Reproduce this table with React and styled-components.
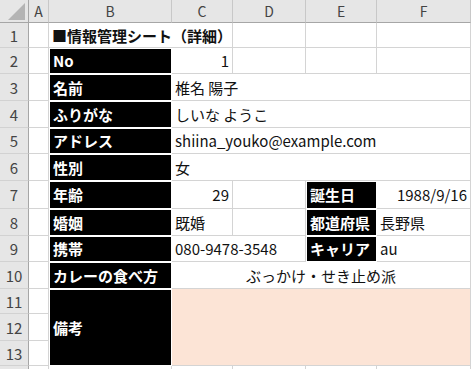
import React from 'react';
import styled, { createGlobalStyle } from 'styled-components';

const GlobalStyle = createGlobalStyle`
  html, body { margin: 0; padding: 0; background: #ffffff; }
  body { font-family: "Noto Sans CJK JP", "Noto Sans", sans-serif; }
`;

const LETTERS = ['A', 'B', 'C', 'D', 'E', 'F'];
const ROW_COUNT = 14;
// Rows whose numbers are fully on screen; the last row only peeks in at the bottom
const NUMBERED_ROWS = 13;

const Sheet = styled.div`
  display: grid;
  grid-template-columns: 29px 20px 123px 61px 73px 71px 94px;
  grid-template-rows: 23px 25px 26px 27px 27px 26px 27px 28px 27px 26px 27px 25px 27px 25px 20px;
  width: 471px;
  height: 369px;
  overflow: hidden;
  font-size: 15px;
  color: #111;
`;

const Corner = styled.div`
  grid-row: 1;
  grid-column: 1;
  background: #e6e6e6;
  border-right: 1px solid #a6a6a6;
  border-bottom: 1px solid #a6a6a6;
  box-sizing: border-box;
  display: flex;
  align-items: flex-end;
  justify-content: flex-end;
  padding: 0 3px 2px 0;
`;

const ColHead = styled.div`
  grid-row: 1;
  grid-column: ${p => p.$col};
  background: #e6e6e6;
  border-right: 1px solid #c8c8c8;
  border-bottom: 1px solid #a6a6a6;
  box-sizing: border-box;
  display: flex;
  align-items: center;
  justify-content: center;
  font-size: 14px;
  color: #444;
`;

const RowHead = styled.div`
  grid-row: ${p => p.$row};
  grid-column: 1;
  background: #e6e6e6;
  border-right: 1px solid #a6a6a6;
  border-bottom: 1px solid #d2d2d2;
  box-sizing: border-box;
  display: flex;
  align-items: center;
  justify-content: center;
  font-size: 15px;
  color: #444;
`;

const Cell = styled.div`
  grid-row: ${p => p.$row} / span ${p => p.$rowSpan || 1};
  grid-column: ${p => p.$col} / span ${p => p.$colSpan || 1};
  box-sizing: border-box;
  border-right: 1px solid #d4d4d4;
  border-bottom: 1px solid #d4d4d4;
  display: flex;
  align-items: center;
  justify-content: ${p => (p.$align === 'right' ? 'flex-end' : p.$align === 'center' ? 'center' : 'flex-start')};
  padding: 0 3px;
  white-space: nowrap;
  overflow: visible;
  background: ${p => p.$fill || 'transparent'};
  font-weight: ${p => (p.$bold ? 700 : 400)};
`;

const Label = styled(Cell)`
  background: #000000;
  color: #ffffff;
  font-weight: 700;
  border-color: #ffffff;
  box-shadow: inset 1px 1px 0 #ffffff;
  padding-left: 4px;
`;

// Column letter of each grid column (grid col 2 = A)
const colOf = letter => LETTERS.indexOf(letter) + 2;

// Cell contents per sheet row; empty cells are filled in afterwards
const rows = {
  1: [{ c: 'B', span: 2, text: '■情報管理シート（詳細）', bold: true }],
  2: [{ c: 'B', label: 'No' }, { c: 'C', text: '1', align: 'right' }],
  3: [{ c: 'B', label: '名前' }, { c: 'C', span: 4, text: '椎名 陽子' }],
  4: [{ c: 'B', label: 'ふりがな' }, { c: 'C', span: 4, text: 'しいな ようこ' }],
  5: [{ c: 'B', label: 'アドレス' }, { c: 'C', span: 4, text: 'shiina_youko@example.com' }],
  6: [{ c: 'B', label: '性別' }, { c: 'C', span: 4, text: '女' }],
  7: [
    { c: 'B', label: '年齢' },
    { c: 'C', text: '29', align: 'right' },
    { c: 'E', label: '誕生日' },
    { c: 'F', text: '1988/9/16', align: 'right' },
  ],
  8: [
    { c: 'B', label: '婚姻' },
    { c: 'C', text: '既婚' },
    { c: 'E', label: '都道府県' },
    { c: 'F', text: '長野県' },
  ],
  9: [
    { c: 'B', label: '携帯' },
    { c: 'C', span: 2, text: '080-9478-3548' },
    { c: 'E', label: 'キャリア' },
    { c: 'F', text: 'au' },
  ],
  10: [{ c: 'B', label: 'カレーの食べ方' }, { c: 'C', span: 4, text: 'ぶっかけ・せき止め派', align: 'center' }],
  11: [
    { c: 'B', rowSpan: 3, label: '備考' },
    { c: 'C', span: 4, rowSpan: 3, text: '', fill: '#fce4d6' },
  ],
};

function buildCells() {
  const covered = new Set();
  const out = [];
  for (let r = 1; r <= ROW_COUNT; r++) {
    (rows[r] || []).forEach(def => {
      const col = colOf(def.c);
      const span = def.span || 1;
      const rowSpan = def.rowSpan || 1;
      for (let dr = 0; dr < rowSpan; dr++)
        for (let dc = 0; dc < span; dc++) covered.add(`${r + dr}:${col + dc}`);
      out.push({ ...def, r, col, span, rowSpan });
    });
  }
  for (let r = 1; r <= ROW_COUNT; r++) {
    for (let col = 2; col <= 7; col++) {
      if (!covered.has(`${r}:${col}`)) out.push({ r, col, span: 1, rowSpan: 1, text: '' });
    }
  }
  return out;
}

export default function App() {
  const cells = buildCells();
  return (
    <>
      <GlobalStyle />
      <Sheet>
        <Corner>
          <svg width="17" height="17" viewBox="0 0 17 17">
            <polygon points="17,0 17,17 0,17" fill="#b4b4b4" />
          </svg>
        </Corner>
        {LETTERS.map((l, i) => (
          <ColHead key={l} $col={i + 2}>{l}</ColHead>
        ))}
        {Array.from({ length: ROW_COUNT }, (_, i) => (
          <RowHead key={i} $row={i + 2}>{i < NUMBERED_ROWS ? i + 1 : ''}</RowHead>
        ))}
        {cells.map(cell => {
          const props = {
            key: `${cell.r}-${cell.col}`,
            $row: cell.r + 1,
            $col: cell.col,
            $colSpan: cell.span,
            $rowSpan: cell.rowSpan,
          };
          if (cell.label) return <Label {...props}>{cell.label}</Label>;
          return (
            <Cell {...props} $align={cell.align} $bold={cell.bold} $fill={cell.fill}>
              {cell.text}
            </Cell>
          );
        })}
      </Sheet>
    </>
  );
}
